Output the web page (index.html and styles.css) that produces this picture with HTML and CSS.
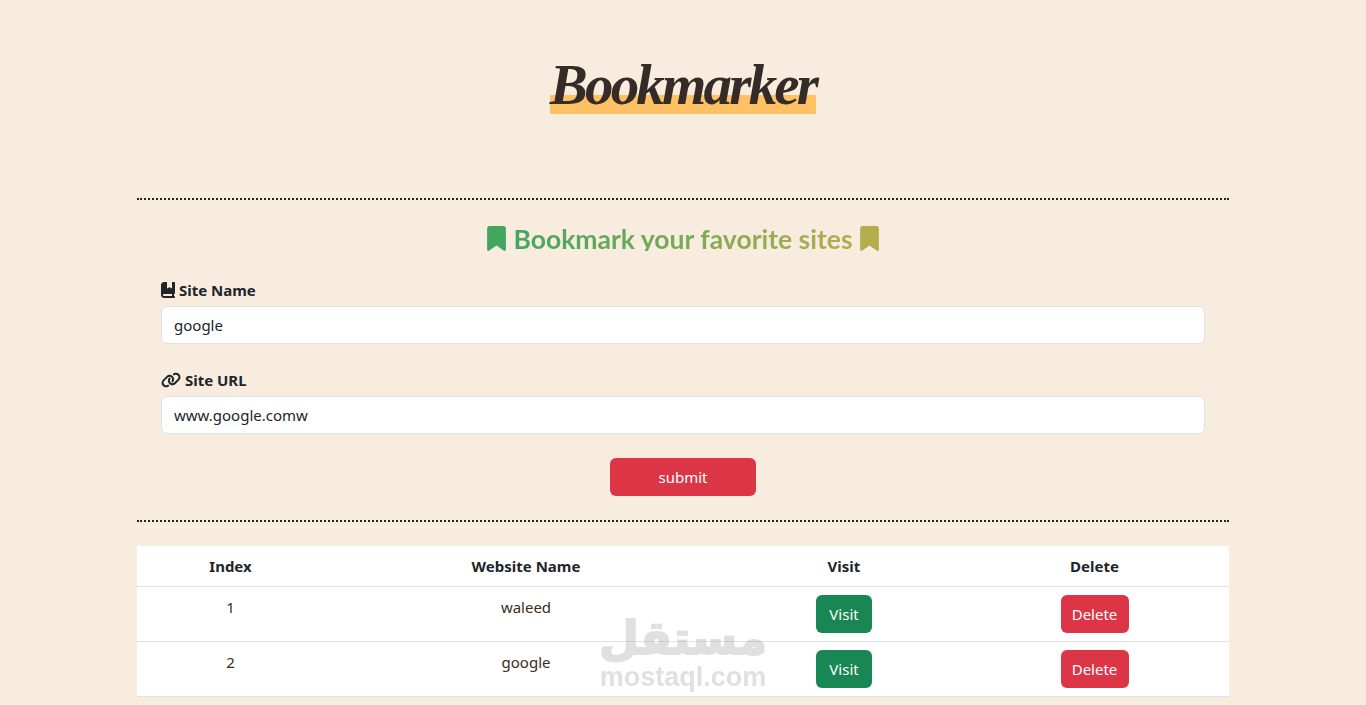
FILE: index.html
```html
<!DOCTYPE html>
<html lang="en">
<head>
    <meta charset="UTF-8">
    <meta name="viewport" content="width=device-width, initial-scale=1.0">
    <link rel="stylesheet" href="styles.css">
    <title>Bookmarker</title>
</head>
<body>
    <header class="site-header">
        <h1 class="logo">Bookmarker</h1>
    </header>

    <div class="container">
        <hr class="dots">

        <h2 class="tagline">
            <svg class="tag-icon" viewBox="0 0 384 512"><path fill="#43a65e" d="M0 48V487.7C0 501.1 10.9 512 24.3 512c5 0 9.9-1.5 14-4.4L192 400 345.7 507.6c4.1 2.9 9 4.4 14 4.4c13.4 0 24.3-10.9 24.3-24.3V48c0-26.5-21.5-48-48-48H48C21.5 0 0 21.5 0 48z"/></svg>
            <span class="tag-text">Bookmark your favorite sites</span>
            <svg class="tag-icon" viewBox="0 0 384 512"><path fill="#b3ad4e" d="M0 48V487.7C0 501.1 10.9 512 24.3 512c5 0 9.9-1.5 14-4.4L192 400 345.7 507.6c4.1 2.9 9 4.4 14 4.4c13.4 0 24.3-10.9 24.3-24.3V48c0-26.5-21.5-48-48-48H48C21.5 0 0 21.5 0 48z"/></svg>
        </h2>

        <form class="site-form">
            <div class="field">
                <label for="siteName">
                    <svg class="label-icon" viewBox="0 0 448 512"><path d="M0 96C0 43 43 0 96 0h96V190.7c0 13.4 15.5 20.9 26 12.5L272 160l54 43.2c10.5 8.4 26 .9 26-12.5V0h32 32c17.7 0 32 14.3 32 32V352c0 17.7-14.3 32-32 32v64c17.7 0 32 14.3 32 32s-14.3 32-32 32H384 96c-53 0-96-43-96-96V96zM64 416c0 17.7 14.3 32 32 32H352V384H96c-17.7 0-32 14.3-32 32z"/></svg>
                    Site Name
                </label>
                <input type="text" id="siteName" value="google">
            </div>
            <div class="field">
                <label for="siteUrl">
                    <svg class="label-icon" viewBox="0 0 640 512"><path d="M579.8 267.7c56.5-56.5 56.5-148 0-204.5c-50-50-128.8-56.5-186.3-15.4l-1.6 1.1c-14.4 10.3-17.7 30.3-7.4 44.6s30.3 17.7 44.6 7.4l1.6-1.1c32.1-22.9 76-19.3 103.8 8.6c31.5 31.5 31.5 82.5 0 114L422.3 334.8c-31.5 31.5-82.5 31.5-114 0c-27.9-27.9-31.5-71.8-8.6-103.8l1.1-1.6c10.3-14.4 6.9-34.4-7.4-44.6s-34.4-6.9-44.6 7.4l-1.1 1.6C206.5 251.2 213 330 263 380c56.5 56.5 148 56.5 204.5 0L579.8 267.7zM60.2 244.3c-56.5 56.5-56.5 148 0 204.5c50 50 128.8 56.5 186.3 15.4l1.6-1.1c14.4-10.3 17.7-30.3 7.4-44.6s-30.3-17.7-44.6-7.4l-1.6 1.1c-32.1 22.9-76 19.3-103.8-8.6C74 372 74 321 105.5 289.5L217.7 177.2c31.5-31.5 82.5-31.5 114 0c27.9 27.9 31.5 71.8 8.6 103.9l-1.1 1.6c-10.3 14.4-6.9 34.4 7.4 44.6s34.4 6.9 44.6-7.4l1.1-1.6C433.5 260.8 427 182 377 132c-56.5-56.5-148-56.5-204.5 0L60.2 244.3z"/></svg>
                    Site URL
                </label>
                <input type="text" id="siteUrl" value="www.google.comw">
            </div>
            <button type="button" class="btn btn-red btn-submit">submit</button>
        </form>

        <hr class="dots">

        <table class="sites">
            <thead>
                <tr>
                    <th class="col-index">Index</th>
                    <th class="col-name">Website Name</th>
                    <th class="col-visit">Visit</th>
                    <th class="col-delete">Delete</th>
                </tr>
            </thead>
            <tbody>
                <tr>
                    <td>1</td>
                    <td>waleed</td>
                    <td><button type="button" class="btn btn-green">Visit</button></td>
                    <td><button type="button" class="btn btn-red btn-delete">Delete</button></td>
                </tr>
                <tr>
                    <td>2</td>
                    <td>google</td>
                    <td><button type="button" class="btn btn-green">Visit</button></td>
                    <td><button type="button" class="btn btn-red btn-delete">Delete</button></td>
                </tr>
            </tbody>
        </table>
    </div>

    <!-- site watermark -->
    <div class="watermark">
        <span class="watermark-ar" lang="ar" dir="rtl">مستقل</span>
        <span class="watermark-en">mostaql.com</span>
    </div>
</body>
</html>
```

FILE: styles.css
```css
* {
    box-sizing: border-box;
}

body {
    font-family: "Noto Sans", "Open Sans", sans-serif;
    font-size: 15px;
    line-height: 24px;
    margin: 0;
    padding: 0;
    color: #212529;
    background-color: #f8ecdf;
}

.site-header {
    height: 198px;
    padding-top: 54px;
    text-align: center;
}

.logo {
    display: inline-block;
    height: 60px;
    margin: 0;
    font-family: "Liberation Serif", serif;
    font-size: 57px;
    font-style: italic;
    font-weight: 700;
    line-height: 62px;
    letter-spacing: -2.8px;
    color: #352c27;
    background-image: linear-gradient(#ffc163, #ffc163);
    background-repeat: no-repeat;
    background-position: bottom;
    background-size: 100% 19px;
}

.container {
    width: 1092px;
    margin: 0 auto;
}

.dots {
    height: 2px;
    margin: 0;
    border: none;
    border-top: 2px dotted #212529;
}

.tagline {
    display: flex;
    justify-content: center;
    align-items: center;
    gap: 7px;
    height: 25px;
    margin: 26px 0 0;
    font-family: Lato, sans-serif;
    font-size: 26.5px;
    font-weight: 700;
}

.tag-icon {
    width: 19px;
    height: 25px;
}

.tag-text {
    background-image: linear-gradient(90deg, #43a65e, #b3ad4e);
    -webkit-background-clip: text;
    background-clip: text;
    color: transparent;
}

.site-form {
    padding: 27px 24px 24px;
    text-align: center;
}

.field {
    margin-bottom: 24px;
    text-align: left;
}

label {
    display: block;
    height: 24px;
    margin-bottom: 4px;
    font-weight: 700;
}

.label-icon {
    height: 16px;
    fill: #212529;
    vertical-align: -2px;
}

input {
    display: block;
    width: 100%;
    height: 38px;
    padding: 6px 12px;
    font: inherit;
    color: #212529;
    background-color: #fff;
    border: 1px solid #dee2e6;
    border-radius: 6px;
}

.btn {
    height: 38px;
    padding: 6px 0;
    font: inherit;
    color: #fff;
    border: none;
    border-radius: 6px;
}

.btn-red {
    background-color: #dc3545;
}

.btn-green {
    width: 56px;
    background-color: #198754;
}

.btn-delete {
    width: 68px;
}

.btn-submit {
    display: block;
    width: 146px;
    margin: 0 auto;
}

.sites {
    width: 100%;
    margin-top: 24px;
    table-layout: fixed;
    border-collapse: collapse;
    background-color: #fff;
    text-align: center;
}

.sites th,
.sites td {
    padding: 8px;
    border-bottom: 1px solid #dee2e6;
    vertical-align: top;
}

.sites td {
    color: #3b2c1c;
}

.col-index { width: 187px; }
.col-name { width: 404px; }
.col-visit { width: 232px; }
.col-delete { width: 269px; }

.watermark {
    position: absolute;
    left: 600px;
    top: 614px;
    width: 166px;
    display: flex;
    flex-direction: column;
    align-items: center;
    color: #9a9a9a;
    opacity: 0.3;
    pointer-events: none;
}

.watermark-ar {
    font-family: "DejaVu Sans", sans-serif;
    font-size: 46px;
    font-weight: 700;
    line-height: 48px;
    -webkit-text-stroke: 2px #9a9a9a;
}

.watermark-en {
    font-family: "Liberation Sans", sans-serif;
    font-size: 27px;
    font-weight: 700;
    line-height: 30px;
}
```
